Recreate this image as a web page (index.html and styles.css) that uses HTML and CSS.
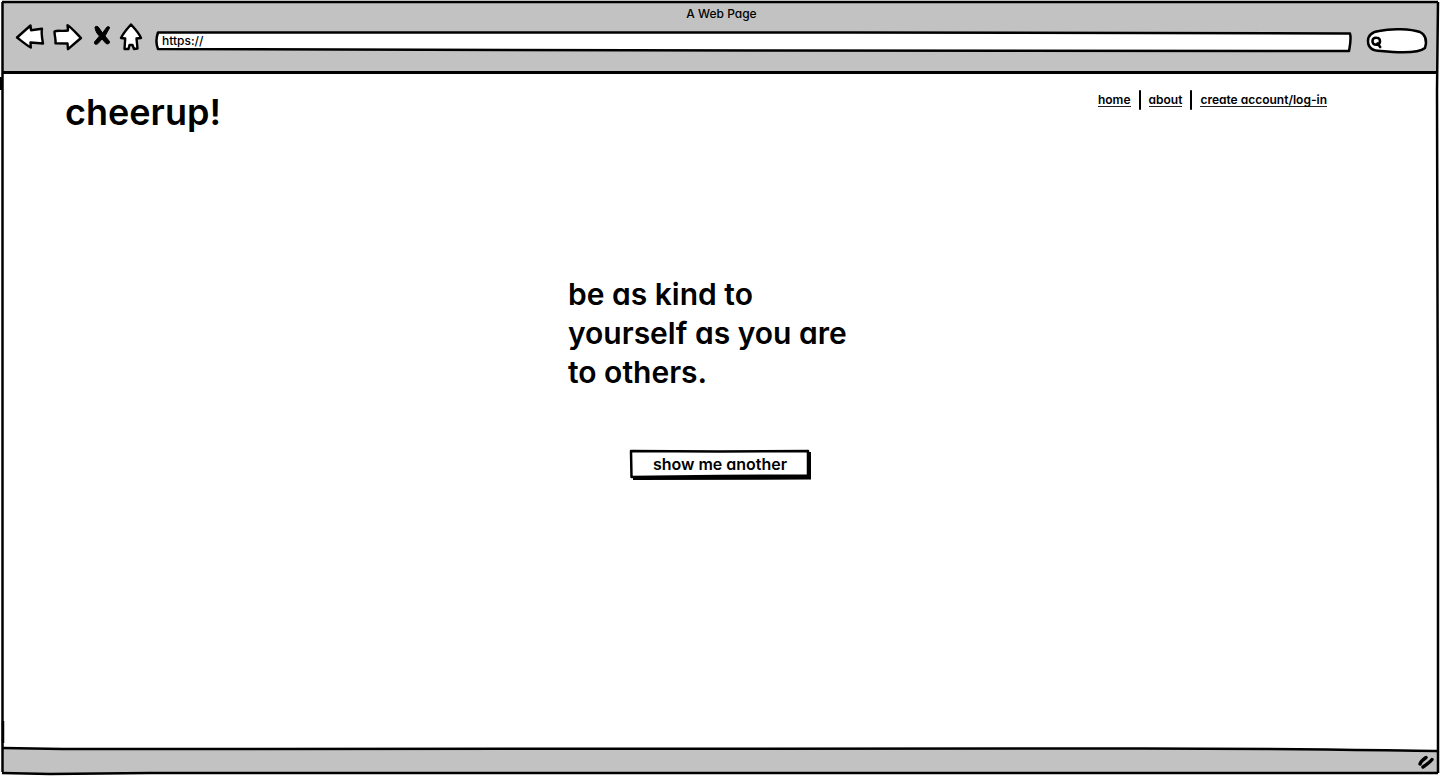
FILE: index.html
```html
<!DOCTYPE html>
<html lang="en">
<head>
<meta charset="utf-8">
<title>A Web Page</title>
<link rel="stylesheet" href="styles.css">
</head>
<body>
<div class="window">
  <svg class="sketch frame-lines" viewBox="0 0 1440 776" preserveAspectRatio="none" aria-hidden="true">
    <path d="M2.500 2V772"/>
    <path d="M1 77V90M3 721V743"/>
    <path d="M1438 2L1437 90 1438 500V773"/>
    <path d="M2 2H1438"/>
    <path d="M2 773L50 774 150 773H1438"/>
  </svg>
  <header class="chrome">
    <div class="chrome-title">A Web Page</div>
    <div class="toolbar">
      <div class="controls">
        <button class="control back" type="button" aria-label="Back">
          <svg class="icon" width="30" height="30" viewBox="0 0 30 30"><path d="M2 14.500L15.500 2.500 16 7.200 27 5.800C26 10 27 15 28 20.500L15.500 19.500 15.800 24.500C10.500 21.500 6 17.500 2 14.500Z"/></svg>
        </button>
        <button class="control forward" type="button" aria-label="Forward">
          <svg class="icon" width="30" height="30" viewBox="0 0 30 30"><path d="M1.500 8.500C4 7 10 8.500 15 7.500L14.500 2.200C19 5 23 10 28 15L15 26.200 14.500 20.500 2.500 20.200C3 16 1.500 13 1.500 8.500Z"/></svg>
        </button>
        <button class="control stop" type="button" aria-label="Stop">
          <svg class="icon cross" width="18" height="30" viewBox="0 0 18 30"><path d="M2 4C3 3 5 3 6 5L9.500 10 14 4C15 3.500 17 3.500 16.500 5L12 13 16.500 18.500C17 20.500 15 21.500 13 20.500L9 16 5 20.500C3 22 1 21.500 1.500 19L6.500 13C4 11 2 7 2 4Z"/></svg>
        </button>
        <button class="control home" type="button" aria-label="Home">
          <svg class="icon" width="24" height="30" viewBox="0 0 24 30"><path d="M12 1.500C9 5 5 9 2 15L6.200 15.500 5.500 26H9.500L10.500 22H13.500L15 26 18.500 25.500 17.500 15.500 22 15C20 10 16 6 12 1.500Z"/></svg>
        </button>
      </div>
      <div class="address">
        <svg class="sketch" viewBox="0 0 1200 22" preserveAspectRatio="none" aria-hidden="true"><path class="paper" d="M3 1.500L700 1.500 1198 2.500C1199.500 8 1198 14 1197 20L600 19.500 3 18C1 13 1 7 3 1.500Z"/></svg>
        <input class="address-input" type="text" value="https://" aria-label="Address">
      </div>
      <div class="search">
        <svg class="sketch" viewBox="0 0 62 30" preserveAspectRatio="none" aria-hidden="true"><path class="paper" d="M13 8C26 5 45 6 54 9C60 12 61 18 59 25C53 30 34 30 15 28C5 28 2 23 2 18C2 12 6 9 13 8Z"/></svg>
        <svg class="lens" width="12" height="13" viewBox="0 0 12 13" aria-hidden="true"><path d="M5.500 1.800C3 1.500 1.500 2.800 1.500 5 1.500 7.500 3 8.800 5.500 8.800 8 8.600 9 7.200 9 5.200 9 3 7.700 1.800 5.500 1.800ZM6.500 7.500L9.200 11"/></svg>
        <input class="search-input" type="search" aria-label="Search">
      </div>
    </div>
  </header>
  <div class="site">
    <header class="site-header">
      <h1 class="brand">cheerup!</h1>
      <nav class="nav">
        <a class="nav-link" href="#home">home</a>
        <a class="nav-link" href="#about">about</a>
        <a class="nav-link" href="#account">create account/log-in</a>
      </nav>
    </header>
    <main class="main">
      <p class="quote">be as kind to yourself as you are to others.</p>
      <button class="another" type="button">
        <svg class="sketch" viewBox="0 0 182 32" preserveAspectRatio="none" aria-hidden="true"><path class="shadow" d="M4 28L180 27 179 4H182V31.500L4 32Z"/><path class="paper" d="M2 3L90 3.500 179 3V27.500L90 28 2.500 29Z"/></svg>
        <span class="another-label">show me another</span>
      </button>
    </main>
  </div>
  <footer class="status">
    <svg class="sketch" viewBox="0 0 1434 26" preserveAspectRatio="none" aria-hidden="true"><path class="fill" d="M0 1.500L60 2.500 1100 1.500C1250 1 1350 3 1434 4V26H0Z"/><path d="M0 1L60 2 1100 1.500C1250 1 1350 3 1434 4"/></svg>
    <svg class="grip" width="18" height="16" viewBox="0 0 18 16" aria-hidden="true"><path d="M3 10C4 7.500 6 5.500 9 3.500M6 13C9 11 12 9 15 5.500"/></svg>
  </footer>
</div>
</body>
</html>
```
FILE: styles.css
```css
* {
  box-sizing: border-box;
}

body {
  margin: 0;
  background: #fff;
  color: #000;
  font-family: Inter, "Liberation Sans", sans-serif;
  font-feature-settings: "cv11";
  font-weight: 500;
}

button,
input {
  padding: 0;
  border: 0;
  background: none;
  color: inherit;
  font: inherit;
  font-feature-settings: inherit;
}

button {
  cursor: pointer;
}

.window {
  position: relative;
  display: flex;
  flex-direction: column;
  min-height: 100vh;
  padding: 2px 3px 3px;
}

.sketch {
  position: absolute;
  inset: 0;
  width: 100%;
  height: 100%;
  overflow: visible;
  fill: none;
  stroke: #000;
  stroke-width: 2.5;
  stroke-linejoin: round;
  pointer-events: none;
}

.sketch path {
  vector-effect: non-scaling-stroke;
}

.sketch .paper {
  fill: #fff;
}

.sketch .fill {
  fill: #c2c2c2;
  stroke: none;
}

.sketch .shadow {
  fill: #000;
  stroke: none;
}

.frame-lines {
  z-index: 1;
}

.chrome {
  padding: 3px 9px 18px 12px;
  border-bottom: 3px solid #000;
  background: #c2c2c2;
}

.chrome-title {
  font-size: 12px;
  line-height: 18px;
  text-align: center;
}

.toolbar {
  display: flex;
  align-items: flex-end;
  height: 30px;
}

.controls {
  display: flex;
}

.control {
  display: flex;
  margin-right: 8px;
}

.forward {
  margin-right: 10px;
}

.icon {
  fill: #fff;
  stroke: #000;
  stroke-width: 2.4;
  stroke-linejoin: round;
}

.cross {
  fill: #000;
  stroke-width: 1;
}

.address {
  position: relative;
  flex: 1;
  height: 22px;
  margin: 0 14px 0 4px;
}

.address-input {
  position: relative;
  display: block;
  width: 100%;
  height: 18px;
  padding-left: 7px;
  font-size: 12px;
}

.search {
  position: relative;
  width: 62px;
  height: 30px;
}

.lens {
  position: absolute;
  top: 13px;
  left: 5px;
  fill: none;
  stroke: #000;
  stroke-width: 2.6;
  stroke-linecap: round;
}

.search-input {
  position: relative;
  width: 100%;
  height: 100%;
  padding: 0 8px 0 20px;
  font-size: 12px;
}

.address-input,
.search-input,
.another {
  outline-offset: 2px;
}

.site {
  display: flex;
  flex: 1;
  flex-direction: column;
}

.site-header {
  display: flex;
  align-items: flex-start;
  justify-content: space-between;
  padding: 16px 110px 0 62px;
}

.brand {
  margin: 0;
  font-size: 36px;
  font-weight: 600;
  line-height: 44px;
}

.nav {
  display: flex;
}

.nav-link {
  margin: 3px 0 0 9px;
  border-bottom: 1px solid #222;
  color: inherit;
  font-size: 12px;
  font-weight: 600;
  line-height: 13px;
  text-decoration: none;
}

.nav-link + .nav-link::before {
  content: "";
  position: absolute;
  width: 2px;
  height: 20px;
  margin: -3px 0 0 -10px;
  border-radius: 1px;
  background: #000;
}

.nav-link + .nav-link {
  margin-left: 18px;
}

.main {
  display: flex;
  flex-direction: column;
  align-items: center;
  padding-top: 141px;
}

.quote {
  width: 304px;
  margin: 0;
  font-size: 30px;
  font-weight: 600;
  line-height: 39px;
}

.another {
  position: relative;
  width: 182px;
  height: 32px;
  margin-top: 56px;
  font-size: 16px;
  font-weight: 600;
}

.another-label {
  position: relative;
}

.status {
  position: relative;
  display: flex;
  align-items: center;
  justify-content: flex-end;
  height: 26px;
  padding: 4px 2px 0 0;
}

.grip {
  position: relative;
  fill: none;
  stroke: #000;
  stroke-width: 3.4;
  stroke-linecap: round;
}
```
